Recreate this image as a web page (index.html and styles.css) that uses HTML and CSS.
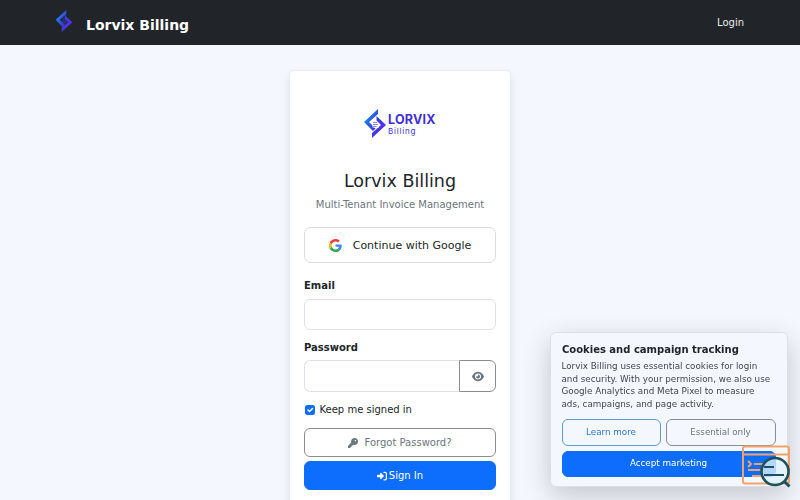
FILE: index.html
```html
<!DOCTYPE html>
<html lang="en">
<head>
<meta charset="utf-8">
<title>Lorvix Billing</title>
<link rel="stylesheet" href="styles.css">
</head>
<body>
<svg class="defs" width="0" height="0" aria-hidden="true">
  <defs>
    <linearGradient id="mark" gradientUnits="userSpaceOnUse" x1="0" y1="8" x2="22" y2="20"><stop offset="0" stop-color="#1592f5"/><stop offset=".5" stop-color="#3540dc"/><stop offset="1" stop-color="#6326ee"/></linearGradient>
  </defs>
</svg>
<header class="navbar">
  <a class="brand">
    <svg class="brand-mark" viewBox="0 0 22 29"><path d="M8.500 10.500h4l3.500 5-5 4-2.500-3Z" fill="#2b2f70"/><path d="M14 0V5.500L5.500 13 12 19.500 9 22.500 0 13Z" fill="url(#mark)"/><path d="M8 29V23.500L16.500 16 12 11.500V6.500L22 16Z" fill="url(#mark)"/></svg>
    <span>Lorvix Billing</span>
  </a>
  <a class="login">Login</a>
</header>
<main class="page">
  <section class="card">
    <div class="logo">
      <svg class="logo-mark" viewBox="0 0 22 29"><path d="M14 0V5L5 13 11.500 19.500 9 22 0 13Z" fill="url(#mark)"/><path d="M8 29V24L17 16 12.500 11.500V7L22 16Z" fill="url(#mark)"/><path d="M8.500 11.500h3.500l3 3V18.500H8.500Z" fill="#fff"/><path d="M9 13.500h4M9 15.500h5M9 17.500h3.500" stroke="#6d6ee0" stroke-width=".8"/></svg>
      <div class="logo-words"><b>LORVIX</b><span>Billing</span></div>
    </div>
    <h1>Lorvix Billing</h1>
    <p class="subtitle">Multi-Tenant Invoice Management</p>
    <button class="google" type="button">
      <svg viewBox="0 0 48 48"><path fill="#ea4335" d="M24 9.500c3.540 0 6.710 1.220 9.210 3.600l6.850-6.850C35.900 2.380 30.470 0 24 0 14.620 0 6.510 5.380 2.560 13.220l7.980 6.190C12.430 13.720 17.740 9.500 24 9.500z"/><path fill="#4285f4" d="M46.980 24.550c0-1.570-.15-3.090-.38-4.550H24v9.020h12.940c-.58 2.960-2.260 5.480-4.780 7.180l7.730 6c4.510-4.180 7.090-10.360 7.090-17.650z"/><path fill="#fbbc05" d="M10.530 28.590A14.500 14.500 0 0 1 9.770 24c0-1.600.27-3.140.76-4.590l-7.980-6.190A24 24 0 0 0 0 24c0 3.880.92 7.540 2.560 10.780z"/><path fill="#34a853" d="M24 48c6.480 0 11.930-2.130 15.890-5.810l-7.730-6c-2.150 1.450-4.920 2.300-8.160 2.300-6.260 0-11.570-4.220-13.470-9.910l-7.980 6.190C6.510 42.620 14.620 48 24 48z"/></svg>
      <span>Continue with Google</span>
    </button>
    <form>
      <label class="label" for="email">Email</label>
      <input class="field" id="email" type="email">
      <label class="label" for="password">Password</label>
      <div class="group">
        <input class="field" id="password" type="password">
        <button class="reveal" type="button" aria-label="Show password">
          <svg viewBox="0 0 576 512"><path fill="#6c757d" d="M288 32c-80.800 0-145.500 36.800-192.600 80.600C48.600 156 17.300 208 2.500 243.700c-3.300 7.900-3.300 16.700 0 24.600C17.300 304 48.600 356 95.400 399.400 142.500 443.200 207.200 480 288 480s145.500-36.800 192.600-80.600c46.800-43.500 78.100-95.400 93-131.100 3.300-7.900 3.300-16.700 0-24.600-14.900-35.700-46.200-87.700-93-131.100C433.500 68.800 368.800 32 288 32zM144 256a144 144 0 1 1 288 0 144 144 0 1 1-288 0zm144-64c0 35.300-28.700 64-64 64-7.100 0-13.900-1.200-20.300-3.300-5.500-1.800-11.900 1.600-11.700 7.400.3 6.900 1.300 13.800 3.200 20.700a96 96 0 1 0 117.600-117.600c-6.900-1.900-13.800-2.900-20.700-3.200-5.800-.2-9.200 6.100-7.400 11.700 2.100 6.400 3.300 13.200 3.300 20.300z"/></svg>
        </button>
      </div>
      <div class="keep">
        <span class="check"><svg viewBox="0 0 20 20"><path d="m6 10 3 3 6-6" fill="none" stroke="#fff" stroke-width="3" stroke-linecap="round" stroke-linejoin="round"/></svg></span>
        <span>Keep me signed in</span>
      </div>
      <button class="forgot" type="button">
        <svg viewBox="0 0 512 512"><path fill="#6c757d" d="M336 352c97.200 0 176-78.800 176-176S433.200 0 336 0 160 78.800 160 176c0 18.700 2.900 36.800 8.300 53.700L7 391c-4.500 4.500-7 10.600-7 17v80c0 13.300 10.700 24 24 24h80c13.300 0 24-10.700 24-24v-40h40c13.300 0 24-10.700 24-24v-40h40c6.400 0 12.500-2.500 17-7l33.300-33.300c16.900 5.400 35 8.300 53.700 8.300zm40-256a40 40 0 1 1 0 80 40 40 0 1 1 0-80z"/></svg>
        <span>Forgot Password?</span>
      </button>
      <button class="signin" type="button">
        <svg viewBox="0 0 512 512"><path fill="#fff" d="m217.900 105.900 122.800 122.800a38.600 38.600 0 0 1 0 54.600L217.900 406.100a33.900 33.900 0 0 1-57.900-24V320H32c-17.700 0-32-14.300-32-32v-64c0-17.700 14.300-32 32-32h128v-62.100a33.900 33.900 0 0 1 57.900-24zM352 416h64c17.700 0 32-14.300 32-32V128c0-17.700-14.300-32-32-32h-64a32 32 0 0 1 0-64h64c53 0 96 43 96 96v256c0 53-43 96-96 96h-64a32 32 0 0 1 0-64z"/></svg>
        <span>Sign In</span>
      </button>
    </form>
  </section>
</main>
<aside class="cookies">
  <h2>Cookies and campaign tracking</h2>
  <p>Lorvix Billing uses essential cookies for login<br>and security. With your permission, we also use<br>Google Analytics and Meta Pixel to measure<br>ads, campaigns, and page activity.</p>
  <div class="choices">
    <button class="learn" type="button">Learn more</button>
    <button class="essential" type="button">Essential only</button>
    <button class="accept" type="button">Accept marketing</button>
  </div>
</aside>
<svg class="inspector" viewBox="0 0 50 46" fill="none">
  <g stroke="#f4a26b" stroke-width="2"><rect x="2" y="2.500" width="46" height="37" rx="2"/><path d="M2 10.500h46M7 17l3 3-3 3M13 20h11M7 26h15M11 32h12"/></g>
  <circle cx="34" cy="27.500" r="13.500" fill="#dff1ff" fill-opacity=".8" stroke="#1d515e" stroke-width="2.600"/>
  <path d="M23 23h10M23 31h20" stroke="#1d515e" stroke-width="2"/>
  <path d="m43.500 37.500 5 5" stroke="#1d515e" stroke-width="3"/>
</svg>
</body>
</html>
```
FILE: styles.css
```css
* { box-sizing: border-box; }
body {
  margin: 0;
  height: 500px;
  overflow: hidden;
  background: #f4f7fe;
  color: #212529;
  font: 10px/15px "DejaVu Sans", sans-serif;
}
button { font: inherit; margin: 0; padding: 0; background: transparent; cursor: pointer; }
.defs { position: absolute; }
.navbar {
  display: flex;
  justify-content: space-between;
  align-items: center;
  height: 45px;
  padding: 0 56px 0 55px;
  background: #212529;
  color: #fff;
}
.brand { display: flex; align-items: center; gap: 13px; font-size: 14px; font-weight: bold; }
.brand span { padding-top: 5px; }
.brand-mark { width: 18px; height: 22px; margin-bottom: 3px; }
.login { color: #e9ebed; }
.page { display: flex; justify-content: center; height: 455px; padding-top: 25px; }
.card {
  width: 222px;
  padding: 36px 14px 0;
  flex: none;
  background: #fff;
  border: 1px solid #e8ebf0;
  border-bottom: 0;
  border-radius: 5px 5px 0 0;
  box-shadow: 0 5px 10px rgba(0, 0, 0, .09);
}
.logo { display: flex; justify-content: center; height: 62px; gap: 2px; padding-top: 2px; }
.logo-mark { width: 22px; height: 29px; }
.logo-words { display: flex; flex-direction: column; width: 48px; padding-top: 5px; color: #4230d5; font-family: Inter, sans-serif; }
.logo-words b { font-size: 12.500px; line-height: 12px; font-weight: 700; letter-spacing: .2px; }
.logo-words span { font-size: 8px; line-height: 10px; letter-spacing: .8px; }
h1 { margin: 0; font-size: 17.5px; line-height: 24px; font-weight: normal; text-align: center; }
.subtitle { margin: 4px -10px 15px; color: #6c757d; text-align: center; }
.google {
  display: flex;
  align-items: center;
  justify-content: center;
  gap: 11px;
  width: 100%;
  height: 36px;
  border: 1px solid #dadce0;
  border-radius: 7px;
  color: #212529;
  font-size: 11px;
}
.google svg { width: 13px; height: 13px; }
.label { display: block; margin: 15px 0 6px; font-weight: bold; }
.field {
  display: block;
  width: 100%;
  height: 31px;
  margin: 0;
  border: 1px solid #dee2e6;
  border-radius: 6px;
  background: #fff;
}
.field + .label { margin: 10px 0 5px; }
.group { display: flex; height: 32px; }
.group .field { flex: 1; min-width: 0; height: 100%; border-right: 0; border-radius: 6px 0 0 6px; }
.reveal {
  display: flex;
  align-items: center;
  justify-content: center;
  width: 37px;
  border: 1px solid #8a8e92;
  border-radius: 0 6px 6px 0;
}
.reveal svg { width: 12px; height: 11px; }
.keep { display: flex; align-items: center; gap: 5px; margin: 10px 0 11px .5px; }
.check { width: 10px; height: 10px; border-radius: 2.500px; background: #0d6efd; }
.check svg { display: block; width: 10px; height: 10px; }
.forgot, .signin {
  display: flex;
  align-items: center;
  justify-content: center;
  width: 100%;
  height: 29px;
  border: 1px solid #8a8e92;
  border-radius: 6px;
  color: #6c757d;
}
.forgot { gap: 6px; }
.forgot svg, .signin svg { width: 10px; height: 10px; }
.signin { gap: 2px; margin-top: 4px; border-color: #0d6efd; background: #0d6efd; color: #fff; }
.cookies {
  position: fixed;
  left: 550px;
  top: 332px;
  width: 238px;
  height: 155px;
  padding: 9px 11px 0;
  border: 1px solid #dce0e6;
  border-radius: 6px;
  background: #f4f8fe;
  box-shadow: 0 9px 28px rgba(0, 0, 0, .2);
}
.cookies h2 { margin: 0 0 3px; font-size: 10px; line-height: 15px; }
.cookies p { margin: 0 0 0 -.5px; color: #41464b; font-size: 8.780px; line-height: 12.600px; white-space: nowrap; }
.choices { display: grid; grid-template-columns: 99px 110px; gap: 5px; margin-top: 9px; margin-left: -.5px; }
.choices button { height: 27px; border: 1px solid; border-radius: 6px; font-size: 8.750px; line-height: 13px; }
.choices .learn { color: #2878c8; border-color: #5b9cd6; }
.choices .essential { color: #6c757d; border-color: #8a8e92; }
.choices .accept { grid-column: 1 / 3; height: 26px; margin-top: -.6px; border-color: #0d6efd; background: #0d6efd; color: #fff; }
.inspector { position: fixed; left: 741px; top: 444px; width: 50px; height: 46px; }
```
